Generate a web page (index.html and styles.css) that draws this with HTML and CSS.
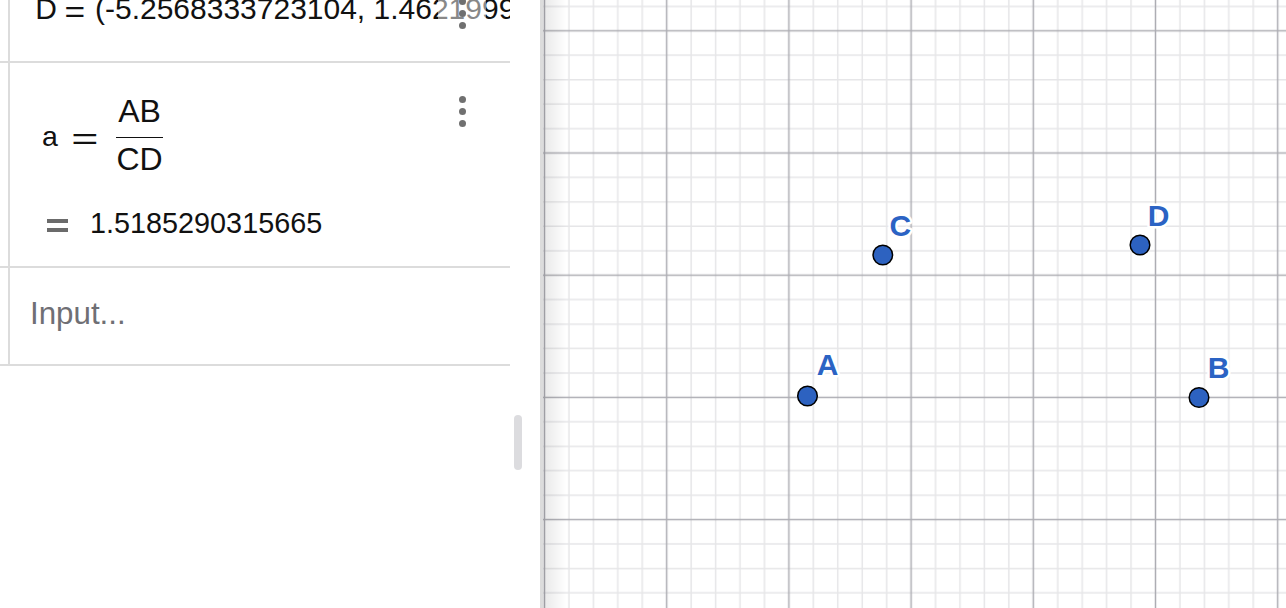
FILE: index.html
```html
<!DOCTYPE html>
<html lang="en">
<head>
<meta charset="utf-8">
<title>Algebra and Graphics</title>
<link rel="stylesheet" href="styles.css">
</head>
<body>
<div class="app">
  <aside class="algebra">
    <div class="av-scroll">
      <div class="av-list">
        <div class="av-row row-point">
          <div class="marble"></div>
          <div class="av-body">
            <div class="def-line"><span class="sym">D</span><span class="eq">=</span><span class="val">(-5.2568333723104, 1.4621999327512)</span></div>
          </div>
          <button class="menu" type="button" aria-label="More options"><i></i><i></i><i></i></button>
        </div>

        <div class="av-row row-func">
          <div class="marble"></div>
          <div class="av-body">
            <div class="math"><span class="m-var">a</span><span class="m-eq">=</span><span class="frac"><span class="num">AB</span><span class="den">CD</span></span></div>
            <div class="output"><span class="out-sign" aria-hidden="true"></span><span class="out-val">1.5185290315665</span></div>
          </div>
          <button class="menu" type="button" aria-label="More options"><i></i><i></i><i></i></button>
        </div>

        <div class="av-row row-input">
          <div class="marble"></div>
          <div class="av-body">
            <div class="placeholder">Input...</div>
          </div>
        </div>
      </div>
    </div>
    <div class="av-track"><div class="thumb"></div></div>
  </aside>

  <div class="splitter"></div>

  <main class="graphics">
    <svg class="plane" width="743" height="608" viewBox="0 0 743 608">
      <defs>
        <pattern id="grid" width="122.2" height="122.2" patternUnits="userSpaceOnUse" x="-59.6" y="-30.3">
          <g class="minor">
            <line x1="12.22" y1="0" x2="12.22" y2="122.2"/>
            <line x1="36.66" y1="0" x2="36.66" y2="122.2"/>
            <line x1="85.54" y1="0" x2="85.54" y2="122.2"/>
            <line x1="109.98" y1="0" x2="109.98" y2="122.2"/>
            <line x1="0" y1="12.22" x2="122.2" y2="12.22"/>
            <line x1="0" y1="36.66" x2="122.2" y2="36.66"/>
            <line x1="0" y1="85.54" x2="122.2" y2="85.54"/>
            <line x1="0" y1="109.98" x2="122.2" y2="109.98"/>
          </g>
          <g class="major">
            <line x1="61.1" y1="0" x2="61.1" y2="122.2"/>
            <line x1="0" y1="61.1" x2="122.2" y2="61.1"/>
          </g>
        </pattern>
      </defs>
      <rect x="0" y="0" width="743" height="608" fill="url(#grid)"/>

      <g class="points">
        <circle cx="264.5" cy="396" r="9.8"/>
        <circle cx="656" cy="397.5" r="9.8"/>
        <circle cx="339.8" cy="255" r="9.8"/>
        <circle cx="597" cy="245" r="9.8"/>
      </g>
      <g class="labels">
        <text x="273.7" y="375">A</text>
        <text x="664.8" y="378">B</text>
        <text x="346.6" y="235.5">C</text>
        <text x="604.8" y="225.5">D</text>
      </g>
    </svg>
    <div class="edge-shade"></div>
  </main>
</div>
</body>
</html>
```

FILE: styles.css
```css
* {
  box-sizing: border-box;
}

html,
body {
  margin: 0;
  padding: 0;
}

body {
  width: 1286px;
  height: 608px;
  overflow: hidden;
  background: #fff;
  font-family: "Liberation Sans", Arial, sans-serif;
  color: #111;
}

.app {
  display: flex;
  height: 608px;
}

/* ---------- algebra view ---------- */

.algebra {
  width: 540px;
  flex: none;
  display: flex;
  background: #fff;
}

.av-scroll {
  width: 510px;
  flex: none;
  overflow: hidden;
}

/* list is scrolled down a little, so the first row is cut at the top */
.av-list {
  margin-top: -40px;
}

.av-row {
  position: relative;
  display: flex;
  border-bottom: 2px solid #dcdcdc;
}

.marble {
  width: 10px;
  flex: none;
  border-right: 2px solid #dcdcdc;
}

.av-body {
  flex: 1;
  min-width: 0;
  white-space: nowrap;
}

/* row: point definition */
.row-point .av-body {
  padding: 34.9px 0 38.1px 25.3px;
}

.def-line {
  height: 28px;
  font-size: 30px;
  line-height: 28px;
}

/* wide, thin relation sign as typeset in formulas */
.eq,
.m-eq {
  display: inline-block;
  width: 17.5px;
  font-size: 30px;
  text-align: center;
  transform-origin: 50% 50%;
}

.eq {
  margin: 0 11.5px 0 9px;
  vertical-align: -3.5px;
  transform: scaleX(1.18);
}

/* row: function with fraction */
.row-func .av-body {
  padding: 32px 0 28.6px 0;
}

.math {
  height: 81px;
  padding-left: 32px;
  font-size: 28.5px;
  line-height: 28px;
}

.m-eq {
  margin: 0 22.7px 0 18.4px;
  vertical-align: -3px;
  transform: scaleX(1.55);
}

.frac {
  display: inline-flex;
  flex-direction: column;
  vertical-align: 24px;
  font-size: 32px;
  line-height: 32px;
  text-align: center;
}

.num {
  padding-bottom: 9.85px;
  border-bottom: 1.5px solid #111;
}

.den {
  padding-top: 5.65px;
}

.output {
  margin-top: 33px;
  height: 28.5px;
  padding-left: 37px;
  font-size: 28.8px;
  line-height: 28.5px;
}

.out-sign {
  display: inline-block;
  width: 21px;
  height: 13px;
  border-top: 4px solid #6b6b6b;
  border-bottom: 4px solid #6b6b6b;
  margin-right: 22px;
  vertical-align: 1px;
}

/* row: input bar */
.row-input .av-body {
  padding: 31px 0 35px 20px;
}

.placeholder {
  font-size: 31.3px;
  line-height: 30px;
  color: #6f6f74;
}

/* three-dot menu button, drawn over the row text */
.menu {
  position: absolute;
  left: 438px;
  width: 48px;
  height: 48px;
  padding: 0;
  border: 0;
  background: rgba(255, 255, 255, 0.5);
  display: flex;
  flex-direction: column;
  align-items: center;
  justify-content: center;
  gap: 5px;
}

.row-point .menu {
  top: 29.7px;
}

.row-func .menu {
  top: 25px;
}

.menu i {
  display: block;
  width: 7px;
  height: 7px;
  border-radius: 50%;
  background: #707070;
}

.av-track {
  width: 30px;
  flex: none;
  padding: 415px 0 0 4px;
}

.thumb {
  width: 8px;
  height: 55px;
  border-radius: 4px;
  background: #dcdcdf;
}

.splitter {
  width: 3px;
  flex: none;
  background: #dcdcdc;
}

/* ---------- graphics view ---------- */

.graphics {
  flex: 1;
  position: relative;
  overflow: hidden;
  background: #fff;
}

.plane {
  display: block;
}

.minor line {
  stroke: #e6e6e8;
  stroke-width: 1.5;
}

.major line {
  stroke: #adadb3;
  stroke-width: 1.5;
}

.points circle {
  fill: #2d62c0;
  stroke: #000;
  stroke-width: 1.5;
}

.labels text {
  font-family: "Liberation Sans", Arial, sans-serif;
  font-size: 30px;
  font-weight: 700;
  fill: #2b63c4;
  stroke: #fff;
  stroke-width: 5px;
  stroke-linejoin: round;
  paint-order: stroke;
}

.edge-shade {
  position: absolute;
  left: 0;
  top: 0;
  bottom: 0;
  width: 24px;
  background: linear-gradient(90deg, rgba(0, 0, 0, 0.09), rgba(0, 0, 0, 0));
  pointer-events: none;
}
```
